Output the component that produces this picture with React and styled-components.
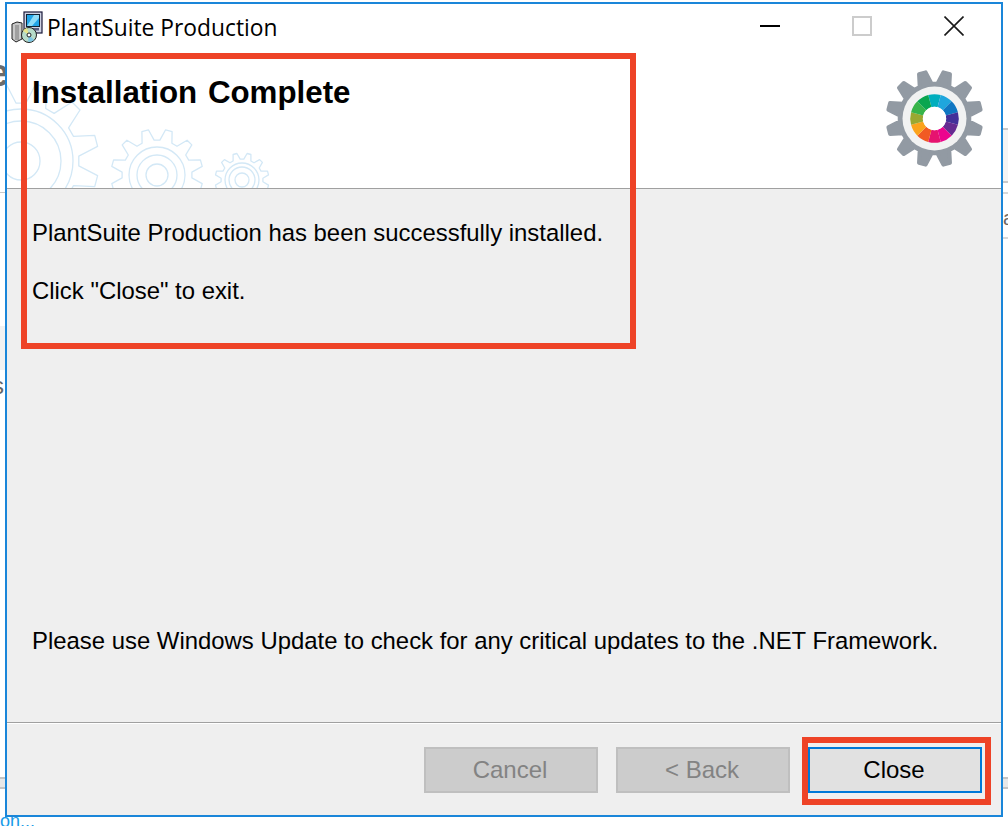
import styled, { createGlobalStyle } from "styled-components"

const GlobalStyle = createGlobalStyle`
    html, body {
        margin: 0;
        padding: 0;
        background: #ffffff;
    }
`
// the slivers of the desktop that stick out left and right of the dialog
const sliver = (color, x, y, w, h) => `linear-gradient(${color}, ${color}) ${x}px ${y}px / ${w}px ${h}px no-repeat`

const Page = styled.div`
    position: relative;
    width: 1008px;
    height: 826px;
    overflow: hidden;
    padding: 2px 5px 0 5px;
    box-sizing: border-box;
    font-family: "Liberation Sans", Arial, sans-serif;
    background:
        ${sliver("#c8c8c8", 0, 192, 5, 1)},
        ${sliver("#f2f2f2", 0, 326, 5, 44)},
        ${sliver("#c4c4c4", 0, 777, 5, 2)},
        ${sliver("#c4c4c4", 0, 787, 5, 2)},
        ${sliver("#e8e8e8", 0, 779, 5, 8)},
        ${sliver("#c8c8c8", 1003, 128, 5, 2)},
        ${sliver("#f4f4f4", 1003, 130, 5, 51)},
        ${sliver("#c8c8c8", 1003, 181, 5, 2)},
        ${sliver("#d8d8d8", 1003, 192, 5, 2)},
        ${sliver("#d8d8d8", 1003, 237, 5, 2)},
        ${sliver("#c4c4c4", 1003, 777, 5, 2)},
        ${sliver("#c4c4c4", 1003, 787, 5, 2)},
        ${sliver("#e8e8e8", 1003, 779, 5, 8)},
        #ffffff;
`
const Peek = styled.span`
    position: absolute;
    left: ${props => props.$x}px;
    top: ${props => props.$y}px;
    font-size: ${props => props.$size}px;
    line-height: 1;
    font-weight: ${props => props.$weight || 400};
    color: ${props => props.$color};
`
const Window = styled.div`
    position: relative;
    width: 998px;
    height: 815px;
    box-sizing: border-box;
    border: 2px solid #1a86d9;
    background: #efefef;
    display: flex;
    flex-direction: column;
`
const Banner = styled.header`
    position: relative;
    height: 184px;
    background: #ffffff;
    border-bottom: 1px solid #a0a0a0;
    overflow: hidden;
    flex-shrink: 0;
`
const TitleBar = styled.div`
    display: flex;
    align-items: center;
    height: 46px;
`
const AppIcon = styled.svg`
    width: 32px;
    height: 32px;
    margin-left: 4px;
`
const TitleText = styled.div`
    margin-left: 4px;
    font-family: "Open Sans", sans-serif;
    font-size: 22.8px;
    color: #000000;
    white-space: nowrap;
`
const WindowControls = styled.div`
    margin-left: auto;
    display: flex;
    align-items: center;
    height: 100%;
    box-sizing: border-box;
    padding: 0 1px 2px 0;
`
const ControlButton = styled.div`
    width: 92px;
    display: flex;
    justify-content: center;
`
const Heading = styled.h1`
    position: relative;
    margin: 25px 0 0 25px;
    font-size: 31.3px;
    line-height: 36px;
    font-weight: 700;
    word-spacing: 2px;
    color: #000000;
`
const GearMark = styled.svg`
    position: absolute;
    right: 18px;
    top: 66px;
    width: 97px;
    height: 97px;
`
const Watermark = styled.svg`
    position: absolute;
    left: -2px;
    top: 50px;
    width: 280px;
    height: 140px;
`
const Body = styled.main`
    flex: 1;
    display: flex;
    flex-direction: column;
    padding: 0 24px 0 25px;
`
const Message = styled.p`
    margin: ${props => props.$top}px 0 0 0;
    font-size: 23.9px;
    line-height: 30px;
    color: #000000;
`
const Footer = styled.footer`
    height: 93px;
    flex-shrink: 0;
    box-sizing: border-box;
    border-top: 1px solid #a0a0a0;
    box-shadow: inset 0 1px 0 #ffffff;
    display: flex;
    justify-content: flex-end;
    gap: 18px;
    padding: 24px 19px 0 0;
`
const Button = styled.button`
    width: 174px;
    height: 46px;
    box-sizing: border-box;
    font-family: inherit;
    font-size: 24px;
    padding: 0 2px 0 0;
    border: ${props => props.$primary ? "2px solid #0078d7" : "2px solid #bfbfbf"};
    background: ${props => props.$primary ? "#e1e1e1" : "#cccccc"};
    color: ${props => props.$primary ? "#000000" : "#838383"};
`
const Callout = styled.div`
    position: absolute;
    left: ${props => props.$x}px;
    top: ${props => props.$y}px;
    width: ${props => props.$w}px;
    height: ${props => props.$h}px;
    box-sizing: border-box;
    border: 6px solid #ee4327;
    pointer-events: none;
`

// gear outline: teeth around a circle, used for the logo and the watermark
function gearPath(cx, cy, outer, inner, teeth, offset = 0) {
    const pts = []
    const step = (Math.PI * 2) / teeth
    for (let i = 0; i < teeth; i++) {
        const a = i * step - Math.PI / 2 + offset * step
        const spots = [
            [inner, a - step * 0.34],
            [outer, a - step * 0.14],
            [outer, a + step * 0.14],
            [inner, a + step * 0.34],
        ]
        spots.forEach(([r, t]) => {
            pts.push(`${(cx + r * Math.cos(t)).toFixed(1)} ${(cy + r * Math.sin(t)).toFixed(1)}`)
        })
    }
    return "M" + pts.join("L") + "Z"
}

const wheelColors = [
    "#00aebd", "#1fa6dd", "#0f76c2", "#43309a", "#652b91", "#ec058e",
    "#e6136f", "#f15a24", "#fba31c", "#9aa831", "#37b44a", "#0aa64f",
]

function wedge(cx, cy, r1, r2, from, to) {
    const p = (r, a) => `${(cx + r * Math.cos(a)).toFixed(2)} ${(cy + r * Math.sin(a)).toFixed(2)}`
    return `M${p(r1, from)}A${r1} ${r1} 0 0 1 ${p(r1, to)}L${p(r2, to)}A${r2} ${r2} 0 0 0 ${p(r2, from)}Z`
}

function ColorGear() {
    const step = (Math.PI * 2) / 12
    return (
        <GearMark viewBox="0 0 100 100">
            <path d={gearPath(50, 50, 48.5, 36, 12, 0.5)} fill="#929aa3" stroke="#929aa3" strokeWidth="4" strokeLinejoin="round" />
            <circle cx="50" cy="50" r="33" fill="#f1f2f2" />
            {wheelColors.map((color, i) => (
                <path
                    key={color}
                    d={wedge(50, 50, 25, 12, -Math.PI / 2 - step * 0.5 + i * step, -Math.PI / 2 + step * 0.5 + i * step)}
                    fill={color}
                />
            ))}
            <circle cx="50" cy="50" r="12" fill="#ffffff" />
        </GearMark>
    )
}

function GearOutline({ cx, cy, outer, inner, teeth, rings }) {
    return (
        <>
            <path d={gearPath(cx, cy, outer, inner, teeth, 0.5)} strokeLinejoin="round" />
            {rings.map(r => <circle key={r} cx={cx} cy={cy} r={r} />)}
        </>
    )
}

function SetupIcon() {
    return (
        <AppIcon viewBox="0 0 32 32">
            <path d="M1 13l5-2 5 1v16l-6 3-4-3z" fill="#c9c9c9" stroke="#222" strokeWidth="1" />
            <path d="M5 14v15M7 14v15" stroke="#777" strokeWidth="1" />
            <rect x="13" y="1" width="18" height="21" fill="#cfd3e4" stroke="#1a1a3a" strokeWidth="1.2" />
            <rect x="15.500" y="3.500" width="13" height="12" fill="#22a5e8" stroke="#123" strokeWidth="1" />
            <path d="M16 15l7-11h5v3l-7 8z" fill="#8edcf8" />
            <rect x="16" y="17" width="12" height="2.500" fill="#5a5f80" />
            <circle cx="18" cy="24" r="7.500" fill="#b7dbc9" stroke="#222" strokeWidth="1" />
            <path d="M18 24L12 20a7 7 0 0 1 4-3z" fill="#e8e48a" />
            <path d="M18 24l5 5a7 7 0 0 1-6 1.500z" fill="#7cc6e6" />
            <circle cx="18" cy="24" r="2" fill="#ffffff" stroke="#222" strokeWidth="1" />
        </AppIcon>
    )
}

export default function App() {
    return (
        <Page>
            <GlobalStyle />
            <Peek $x={-12} $y={54} $size={38} $weight={700} $color="#6b6b6b">e</Peek>
            <Peek $x={-8} $y={374} $size={24} $color="#666666">s</Peek>
            <Peek $x={1003} $y={208} $size={20} $color="#6e6660">a</Peek>
            <Peek $x={0} $y={812} $size={18} $color="#1a9be8">on...</Peek>
            <Window>
                <Banner>
                    <Watermark viewBox="0 0 280 140" fill="none" stroke="#d3e8f6" strokeWidth="1.3">
                        <GearOutline cx={16} cy={107} outer={78} inner={58} teeth={12} rings={[52, 40, 19]} />
                        <GearOutline cx={152} cy={121} outer={46} inner={35} teeth={12} rings={[28, 20, 11]} />
                        <GearOutline cx={237} cy={126} outer={27} inner={21} teeth={12} rings={[17, 13, 7]} />
                    </Watermark>
                    <TitleBar>
                        <SetupIcon />
                        <TitleText>PlantSuite Production</TitleText>
                        <WindowControls>
                            <ControlButton>
                                <svg width="20" height="20" viewBox="0 0 20 20"><path d="M0 10h20" stroke="#000" strokeWidth="2" /></svg>
                            </ControlButton>
                            <ControlButton>
                                <svg width="20" height="20" viewBox="0 0 20 20"><rect x="1" y="1" width="18" height="18" fill="none" stroke="#cccccc" strokeWidth="2" /></svg>
                            </ControlButton>
                            <ControlButton>
                                <svg width="20" height="20" viewBox="0 0 20 20"><path d="M0.500 0.500l19 19M19.500 0.500l-19 19" stroke="#1a1a1a" strokeWidth="1.6" /></svg>
                            </ControlButton>
                        </WindowControls>
                    </TitleBar>
                    <Heading>Installation Complete</Heading>
                    <ColorGear />
                </Banner>
                <Body>
                    <Message $top={29}>PlantSuite Production has been successfully installed.</Message>
                    <Message $top={28}>Click "Close" to exit.</Message>
                    <Message $top={320}>Please use Windows Update to check for any critical updates to the .NET Framework.</Message>
                </Body>
                <Footer>
                    <Button disabled>Cancel</Button>
                    <Button disabled>&lt; Back</Button>
                    <Button $primary>Close</Button>
                </Footer>
            </Window>
            <Callout $x={21} $y={53} $w={615} $h={296} />
            <Callout $x={802} $y={737} $w={189} $h={68} />
        </Page>
    )
}
